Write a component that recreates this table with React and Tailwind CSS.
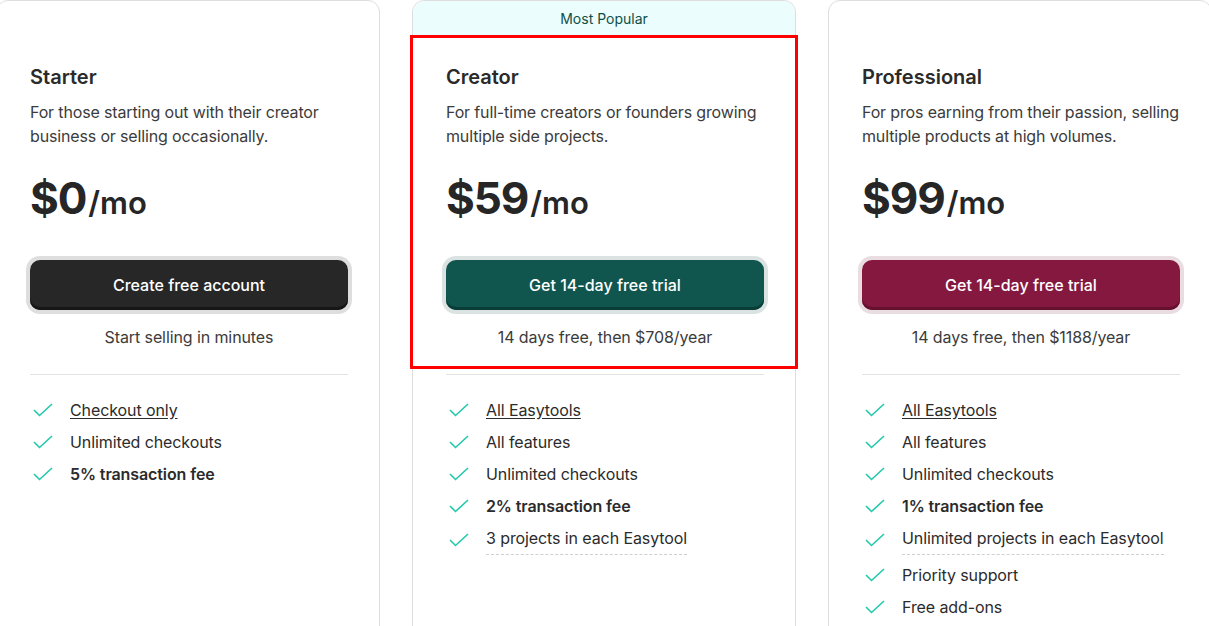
import React from "react";

const plans = [
  {
    name: "Starter",
    desc: "For those starting out with their creator business or selling occasionally.",
    price: "$0",
    cta: "Create free account",
    btn: "bg-[#272727] shadow-[inset_0_-3px_0_#161616] ring-[#dedede]",
    note: "Start selling in minutes",
    features: [
      { t: "Checkout only", link: true },
      { t: "Unlimited checkouts" },
      { t: "5% transaction fee", bold: true },
    ],
  },
  {
    name: "Creator",
    popular: true,
    desc: "For full-time creators or founders growing multiple side projects.",
    price: "$59",
    cta: "Get 14-day free trial",
    btn: "bg-[#10554e] shadow-[inset_0_-3px_0_#0a3d38] ring-[#dae3e2]",
    note: "14 days free, then $708/year",
    features: [
      { t: "All Easytools", link: true },
      { t: "All features" },
      { t: "Unlimited checkouts" },
      { t: "2% transaction fee", bold: true },
      { t: "3 projects in each Easytool", dashed: true },
    ],
  },
  {
    name: "Professional",
    desc: "For pros earning from their passion, selling multiple products at high volumes.",
    price: "$99",
    cta: "Get 14-day free trial",
    btn: "bg-[#84183f] shadow-[inset_0_-3px_0_#65102f] ring-[#e9dde1]",
    note: "14 days free, then $1188/year",
    features: [
      { t: "All Easytools", link: true },
      { t: "All features" },
      { t: "Unlimited checkouts" },
      { t: "1% transaction fee", bold: true },
      { t: "Unlimited projects in each Easytool", dashed: true },
      { t: "Priority support" },
      { t: "Free add-ons" },
    ],
  },
];

function Check() {
  return (
    <svg viewBox="0 0 20 14" className="ml-[3px] h-[14px] w-[20px] shrink-0" fill="none">
      <polyline points="1,7 6.5,12.5 19,1" stroke="#22c9a9" strokeWidth="1.6" />
    </svg>
  );
}

function Card({ plan }) {
  return (
    <div className="flex h-[700px] flex-col rounded-xl border border-[#dedede]">
      <div
        className={`flex h-[35px] items-center justify-center rounded-t-xl text-sm text-[#0f4f49] ${
          plan.popular ? "bg-[#ebfdfc]" : ""
        }`}
      >
        {plan.popular ? "Most Popular" : ""}
      </div>
      <div className="flex flex-col pl-[33px] pr-[31px] pt-[27px]">
        <h3 className="text-xl font-semibold leading-7 text-[#2a2a2a]">{plan.name}</h3>
        <p className="mt-[9px] text-base leading-6 tracking-[-0.15px] text-[#3b3b3b]">{plan.desc}</p>
        <div className="mt-[26px] flex items-baseline text-[#262626]">
          <span className="text-[44px] font-bold leading-[48px] tracking-tight">{plan.price}</span>
          <span className="ml-[2px] text-[31px] font-semibold">/mo</span>
        </div>
        <button
          className={`mt-[33px] h-[50px] w-full rounded-[10px] text-base font-medium text-white ring-4 ${plan.btn}`}
        >
          {plan.cta}
        </button>
        <p className="mt-[15px] text-center text-base leading-6 tracking-[-0.1px] text-[#3b3b3b]">{plan.note}</p>
        <div className="mt-[25px] border-t border-[#e3e3e3]" />
        <ul className="mt-[23px] flex flex-col gap-2">
          {plan.features.map((f) => (
            <li key={f.t} className="flex items-center text-base leading-6 tracking-[-0.1px] text-[#2b2b2b]">
              <Check />
              <span
                className={`ml-[17px] ${f.link ? "underline underline-offset-2" : ""} ${
                  f.bold ? "font-semibold" : ""
                } ${f.dashed ? "border-b border-dashed border-[#cfcfcf] pb-[4px]" : ""}`}
              >
                {f.t}
              </span>
            </li>
          ))}
        </ul>
      </div>
    </div>
  );
}

export default function App() {
  return (
    <div
      className="relative h-[626px] w-[1209px] overflow-hidden bg-white"
      style={{ fontFamily: "Inter, 'Noto Sans', sans-serif" }}
    >
      <div className="ml-[-4px] grid grid-cols-[384px_384px_384px] gap-8">
        {plans.map((p) => (
          <Card key={p.name} plan={p} />
        ))}
      </div>
      <div className="pointer-events-none absolute left-[410px] top-[35px] h-[334px] w-[388px] border-[3px] border-[#ff0000]" />
    </div>
  );
}
